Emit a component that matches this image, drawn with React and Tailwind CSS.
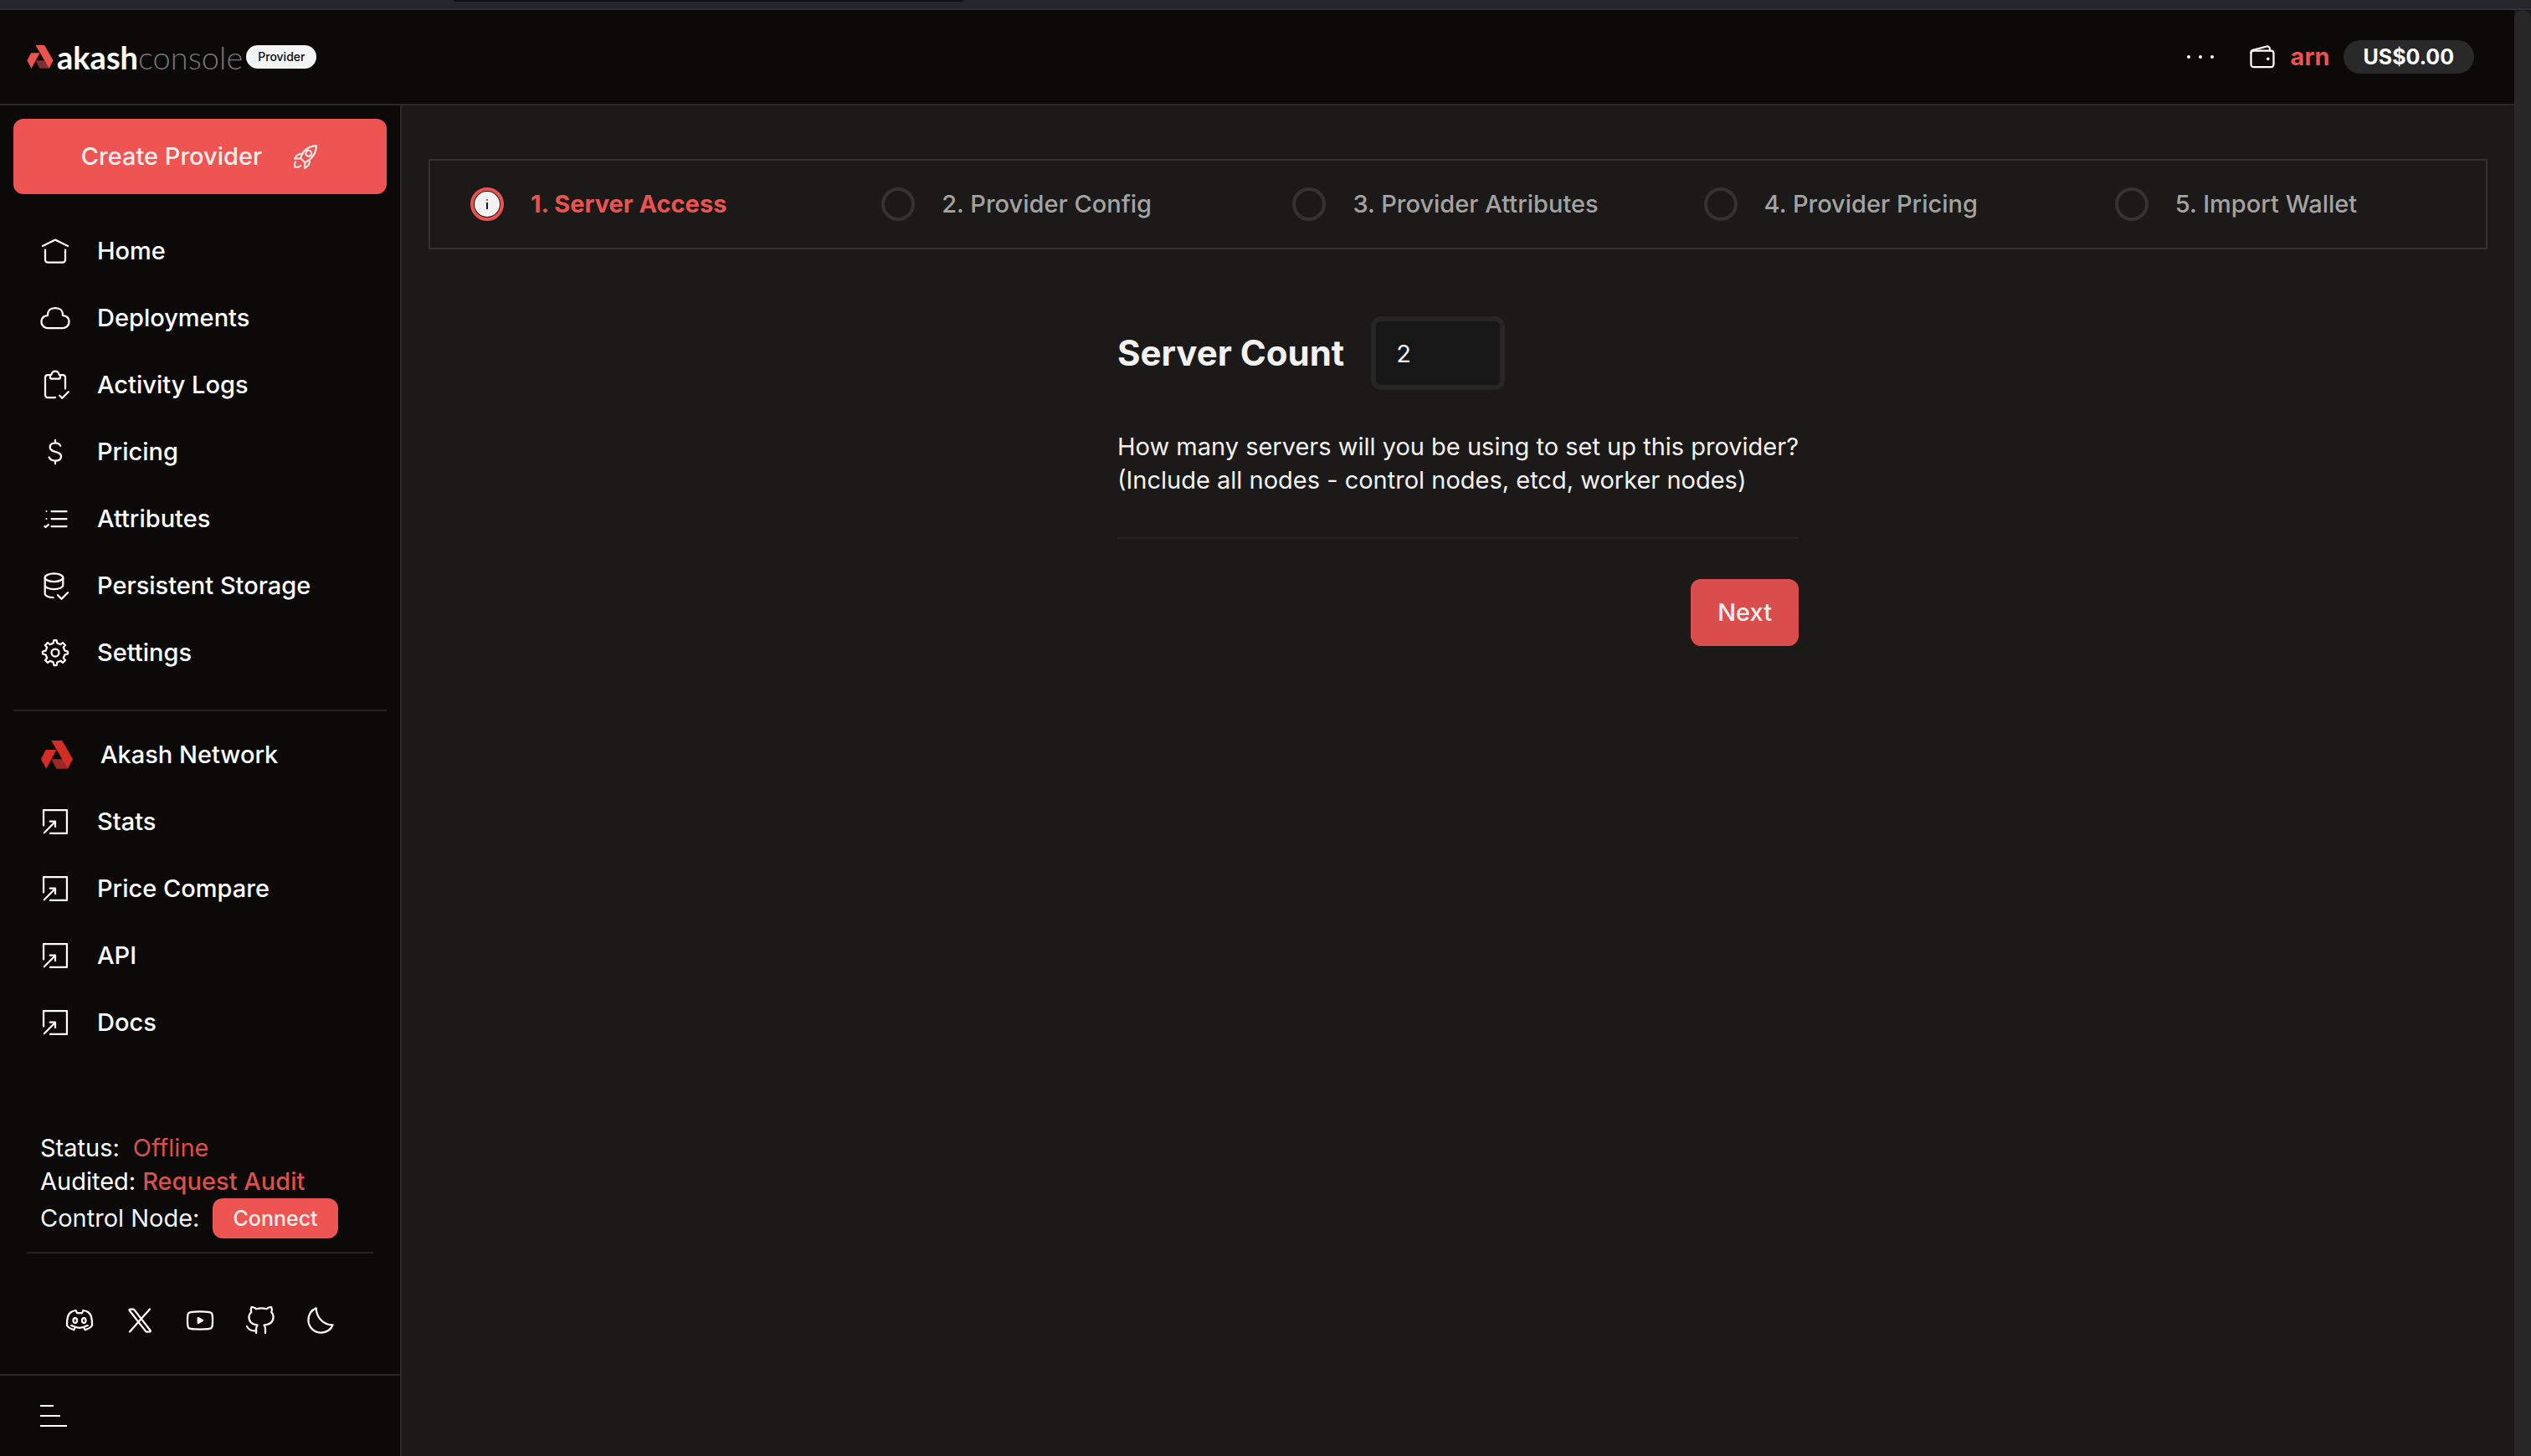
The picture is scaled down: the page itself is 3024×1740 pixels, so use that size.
const nav = "flex h-20 items-center gap-8 px-8 font-medium text-white";

function Stroke({ size = "size-9", children }) {
  return (
    <svg viewBox="0 0 24 24" className={`${size} shrink-0`} fill="none" stroke="currentColor" strokeWidth="1.5" strokeLinecap="round" strokeLinejoin="round" aria-hidden="true">
      {children}
    </svg>
  );
}

const icons = {
  home: (
    <Stroke>
      <path d="M2 8L11.73 3.13a.6.6 0 0 1 .54 0L22 8" />
      <path d="M20 11v8a2 2 0 0 1-2 2H6a2 2 0 0 1-2-2v-8" />
    </Stroke>
  ),
  cloud: (
    <Stroke>
      <path d="M12 4C6 4 6 8 6 10c-1.67 0-5 1-5 5s3.33 5 5 5h12c1.67 0 5-1 5-5s-3.33-5-5-5c0-2 0-6-6-6Z" />
    </Stroke>
  ),
  logs: (
    <Stroke>
      <path d="M8.5 4H6a2 2 0 0 0-2 2v14a2 2 0 0 0 2 2h6M15.5 4H18a2 2 0 0 1 2 2v9" />
      <path d="M8 6.4V4.5c0-.28.22-.5.5-.5.28 0 .5-.22.55-.5C9.2 2.65 9.77 1 12 1s2.8 1.65 2.95 2.5c.05.28.27.5.55.5.28 0 .5.22.5.5v1.9a.6.6 0 0 1-.6.6H8.6a.6.6 0 0 1-.6-.6ZM15.5 20.5l2 2 5-5" />
    </Stroke>
  ),
  dollar: (
    <Stroke>
      <path d="M16.15 7.15C15.5 5.7 14 4.9 12 4.9c-2.5 0-4.2 1.3-4.2 3.4 0 4.9 8.9 2.5 8.9 7.3 0 2.2-1.9 3.5-4.7 3.5-2.4 0-4.2-1-4.9-2.8M12 2.5v2.4M12 19.1v2.4" />
    </Stroke>
  ),
  list: (
    <Stroke>
      <path d="M9 5.5h12M9 11.5h12M9 17.5h12" transform="translate(0 .5)" />
      <path d="M5 6v.01M5 12v.01" strokeWidth="1.3" />
      <path d="M3.6 18l.8.6 2.1-1.9" />
    </Stroke>
  ),
  database: (
    <Stroke>
      <ellipse cx="11" cy="5.5" rx="7.2" ry="3.2" />
      <path d="M3.8 5.5v12.7c0 1.8 2.8 3.1 6.6 3.2M3.8 11.5c0 1.8 3.2 3.2 7.2 3.2s7.2-1.4 7.2-3.2v-6" />
      <path d="M14 19.5l3 3 5-5" />
    </Stroke>
  ),
  gear: (
    <Stroke>
      <path d="M12 15a3 3 0 1 0 0-6 3 3 0 0 0 0 6Z" />
      <path d="M19.62 10.4 18.52 7.74 20 6l-2-2-1.74 1.48-2.7-1.11L12.94 2h-1.96l-.63 2.4-2.65 1.12L6 4 4 6l1.45 1.79-1.08 2.66L2 11v2l2.4.66 1.12 2.64L4 18l2 2 1.79-1.46 2.6 1.07L11 22h2l.6-2.39 2.66-1.1c.44.32 1.74 1.49 1.74 1.49l2-2-1.48-1.75 1.1-2.65L22 12.98V11l-2.38-.6Z" />
    </Stroke>
  ),
  window: (
    <Stroke>
      <path d="M2.7 15V2.7h18.6v18.6H8M3.2 20.8l8.6-8.6M7.8 11.8h4.2v4.2" />
    </Stroke>
  ),
};

const mainLinks = [
  ["Home", icons.home],
  ["Deployments", icons.cloud],
  ["Activity Logs", icons.logs],
  ["Pricing", icons.dollar],
  ["Attributes", icons.list],
  ["Persistent Storage", icons.database],
  ["Settings", icons.gear],
];

const steps = ["1. Server Access", "2. Provider Config", "3. Provider Attributes", "4. Provider Pricing", "5. Import Wallet"];

function AkashMark({ className, main, shade }) {
  return (
    <svg viewBox="0 0 38 34" className={className} aria-hidden="true">
      <path d="M12.3 22.3h13.4l6.3 11.4H18.3z" fill={shade} />
      <path d="M12.3 0h12.9L38 22.3l-6 11.4z" fill={main} />
      <path d="M5.8 11.1h12.7L6.3 33.7 0 22.3z" fill={main} />
    </svg>
  );
}

export default function App() {
  return (
    <div className="flex min-h-screen flex-col bg-[#1b1a18] font-['Inter',sans-serif] text-[29px] leading-10 text-[#f2f2f2]">
      <div className="h-3 border-b-2 border-[#323138] bg-[#26252a]">
        <div className="ml-[542px] h-0.5 w-[610px] rounded-b bg-[#111014]" />
      </div>
      <div className="flex grow">
        <div className="flex grow flex-col">
          <header className="flex h-[114px] items-center border-b-2 border-[#292929] bg-[#0b0a08] pl-8 pr-12">
            <a href="#" className="flex items-center">
              <AkashMark className="h-7 w-8" main="#eb5351" shade="#7d2f2d" />
              <span className="ml-1 font-['Lato',sans-serif] text-[38px] font-bold text-white">akash</span>
              <span className="font-['Lato',sans-serif] text-[38px] font-light text-[#757575]">console</span>
            </a>
            <span className="ml-1 flex h-7 items-center rounded-full bg-[#f3f4f6] px-3.5 text-[14px] font-medium text-[#0b0a08]">Provider</span>
            <button type="button" aria-label="More" className="ml-auto flex gap-2.5 text-white">
              <span className="size-1 rounded-full bg-white" />
              <span className="size-1 rounded-full bg-white" />
              <span className="size-1 rounded-full bg-white" />
            </button>
            <span className="ml-10 text-white">
              <Stroke>
                <path d="M19 20H5a2 2 0 0 1-2-2V9a2 2 0 0 1 2-2h14a2 2 0 0 1 2 2v9a2 2 0 0 1-2 2Z" />
                <path d="M16.5 14a.5.5 0 1 1 0-1 .5.5 0 0 1 0 1Z" fill="currentColor" />
                <path d="M18 7V5.6a2 2 0 0 0-2.5-1.93L4.5 6.6A2 2 0 0 0 3 8.5V9" />
              </Stroke>
            </span>
            <a href="#" className="ml-4 font-bold text-[#eb5351]">arn</a>
            <span className="ml-4 flex h-10 items-center rounded-full bg-[#292929] px-6 text-[25px] font-bold text-white">US$0.00</span>
          </header>
          <div className="flex grow">
            <aside className="flex w-[480px] shrink-0 flex-col border-r-2 border-[#2a2a2a] bg-[#0b0a08]">
              <div className="px-4 pt-4">
                <button type="button" className="flex h-[90px] w-full items-center justify-center gap-9 rounded-xl bg-[#ed5452] font-medium text-[#fdeeee]">
                  Create Provider
                  <Stroke size="size-8">
                    <path d="M7.6 13.6C9 8 13.4 3 21.8 2.2c-.1 7.4-4.6 12.2-10.2 15.2Z" />
                    <circle cx="14.8" cy="9.2" r="2.6" />
                    <path d="M9.6 9.6c-2.2-.3-4.2.3-5.4 1.6L2.2 14l5.4-.4M15.4 15c.6 2.2 0 4-1.4 5.4l-2.8 2.2.4-5.2" />
                    <path d="M3 16.8c-.9 1.4-.9 3-.6 4.6 1.8.4 4 .2 5.4-1.2" />
                  </Stroke>
                </button>
                <nav className="mt-7 border-b-2 border-[#242424] pb-7">
                  {mainLinks.map(([label, icon]) => (
                    <a href="#" key={label} className={nav}>{icon}{label}</a>
                  ))}
                </nav>
                <nav className="mt-3">
                  <a href="#" className={nav}>
                    <AkashMark className="h-[34px] w-10 shrink-0" main="#d42d26" shade="#9c2822" />
                    Akash Network
                  </a>
                  {["Stats", "Price Compare", "API", "Docs"].map((label) => (
                    <a href="#" key={label} className={nav}>{icons.window}{label}</a>
                  ))}
                </nav>
              </div>
              <div className="mt-auto px-8">
                <div className="border-b-2 border-[#242424] px-4 pb-4">
                  <div className="flex gap-4 text-white">Status: <span className="text-[#dc4f4a]">Offline</span></div>
                  <div className="flex gap-2 text-white">Audited: <a href="#" className="font-medium text-[#dc4f4a]">Request Audit</a></div>
                  <div className="flex items-center gap-4">
                    Control Node:
                    <button type="button" className="h-12 rounded-xl bg-[#ed5452] px-6 text-[25px] font-medium text-[#fdeeee]">Connect</button>
                  </div>
                </div>
                <div className="flex h-36 items-center justify-center gap-9 pt-4 text-white">
                  <a href="#" aria-label="Discord">
                    <Stroke>
                      <path d="M5.5 16c5 2.5 8 2.5 13 0M15.5 17.5l1 2s4.17-1.33 5.5-3.5c0-1 .53-8.15-3-10.5-1.5-1-4-1.5-4-1.5l-1 2h-2M8.53 17.5l-1 2s-4.17-1.33-5.5-3.5c0-1-.53-8.15 3-10.5 1.5-1 4-1.5 4-1.5l1 2h2" />
                      <ellipse cx="8.5" cy="12" rx="1.5" ry="2" />
                      <ellipse cx="15.5" cy="12" rx="1.5" ry="2" />
                    </Stroke>
                  </a>
                  <a href="#" aria-label="X">
                    <Stroke><path d="M16.82 20.77 3.75 3.97A.6.6 0 0 1 4.22 3h2.67a.6.6 0 0 1 .47.23l13.07 16.8a.6.6 0 0 1-.48.97h-2.66a.6.6 0 0 1-.47-.23ZM20 3 4 21" /></Stroke>
                  </a>
                  <a href="#" aria-label="YouTube">
                    <Stroke>
                      <path d="m14 12-3.5 2v-4l3.5 2Z" fill="currentColor" />
                      <path d="M2 12.7v-1.4c0-2.87 0-4.3.9-5.23.89-.92 2.3-.96 5.12-1.04a140 140 0 0 1 7.96 0c2.82.08 4.23.12 5.13 1.04.89.93.89 2.36.89 5.23v1.4c0 2.87 0 4.3-.9 5.23-.89.92-2.3.96-5.12 1.04a140 140 0 0 1-7.96 0c-2.82-.08-4.23-.12-5.13-1.04C2 17 2 15.57 2 12.7Z" />
                    </Stroke>
                  </a>
                  <a href="#" aria-label="GitHub">
                    <Stroke><path d="M16 22.03v-3.16a4.4 4.4 0 0 0-1.04-3.2C20 15.31 22.4 13.13 22.4 9a5.1 5.1 0 0 0-1.53-3.6 4.7 4.7 0 0 0-.1-4s-1.16-.36-3.93 1.43a16 16 0 0 0-7.94 0C6.13 1.04 4.97 1.4 4.97 1.4a4.7 4.7 0 0 0-.1 4A5.1 5.1 0 0 0 2.94 9c0 4.1 2.4 6.28 6.84 6.68A4.4 4.4 0 0 0 8.74 18.83V22.03M8.74 20.03C5 20.9 3 19.6 1.34 16.83" /></Stroke>
                  </a>
                  <button type="button" aria-label="Dark mode">
                    <Stroke><path d="M8.5 2.2C8.5 9 14 15.8 21.7 15.6c-1.2 3.6-4.9 6.1-9.2 6.1C7 21.7 2.3 17.5 2.3 11.8c0-4.3 2.4-8 6.2-9.6Z" /></Stroke>
                  </button>
                </div>
              </div>
              <div className="flex h-[98px] items-center border-t-2 border-[#2a2a2a] px-12">
                <button type="button" aria-label="Collapse menu" className="flex flex-col gap-2.5">
                  <span className="h-0.5 w-4 bg-white" />
                  <span className="h-0.5 w-6 bg-white" />
                  <span className="h-0.5 w-8 bg-white" />
                </button>
              </div>
            </aside>
            <main className="grow px-8 pt-16">
              <ol className="grid h-[108px] grid-cols-5 border-2 border-[#333332]">
                {steps.map((s, i) => (
                  <li key={s} className={i === 0 ? "flex items-center gap-8 pl-12 font-bold text-[#eb5351]" : "flex items-center gap-8 pl-12 font-medium text-[#a3a3a2]"}>
                    {i === 0 ? (
                      <span className="flex size-10 items-center justify-center rounded-full border-4 border-[#eb5351]">
                        <span className="flex size-[30px] flex-col items-center justify-center gap-0.5 rounded-full bg-[#f2f2f2]">
                          <span className="size-0.5 bg-[#777777]" />
                          <span className="h-2 w-0.5 bg-[#1b1a18]" />
                        </span>
                      </span>
                    ) : (
                      <span className="size-10 rounded-full border-4 border-[#333332]" />
                    )}
                    {s}
                  </li>
                ))}
              </ol>
              <form className="mx-auto mt-20 w-fit">
                <div className="flex items-center gap-8">
                  <label htmlFor="count" className="text-[42px] font-bold">Server Count</label>
                  <input id="count" type="text" defaultValue="2" className="h-[88px] w-40 rounded-xl border-[6px] border-[#262626] bg-[#171717] px-6 outline-none" />
                </div>
                <p className="mt-12 border-b-2 border-[#262626] pb-12">
                  How many servers will you be using to set up this provider?
                  <br />
                  (Include all nodes - control nodes, etcd, worker nodes)
                </p>
                <div className="mt-12 flex justify-end">
                  <button type="button" className="h-20 rounded-xl bg-[#d94d4d] px-8 font-medium text-[#fdeeee]">Next</button>
                </div>
              </form>
            </main>
          </div>
        </div>
        <div className="w-5 shrink-0 rounded-t-full bg-[#272727]" />
      </div>
    </div>
  );
}
